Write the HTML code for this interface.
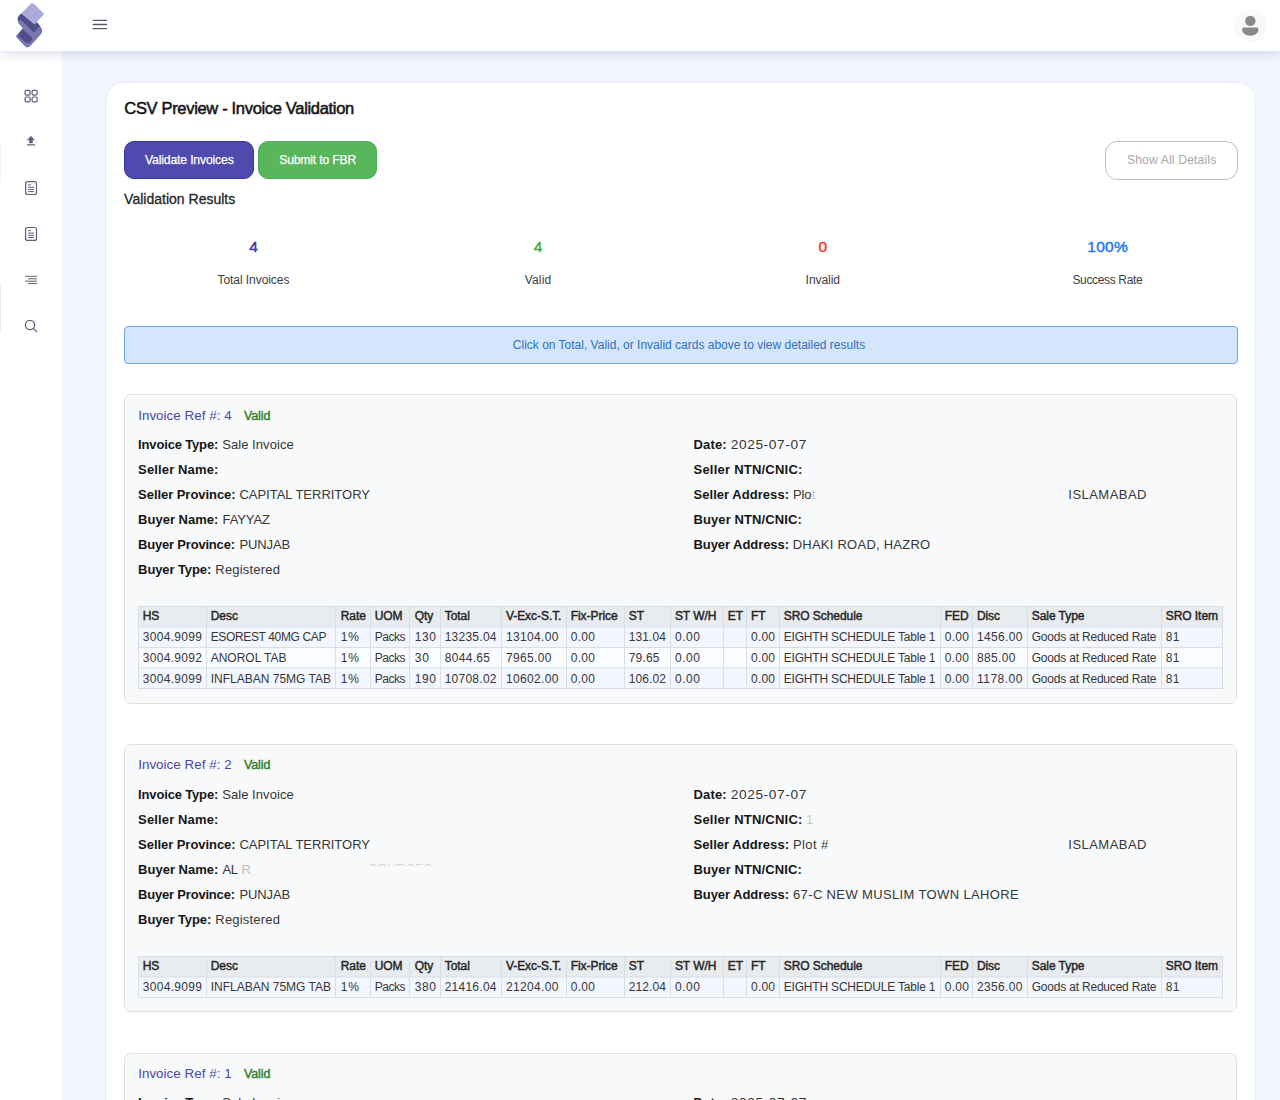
<!DOCTYPE html>
<html><head><meta charset="utf-8">
<style>
*{box-sizing:border-box;margin:0;padding:0}
html,body{width:1280px;height:1100px;overflow:hidden}
body{background:#f3f6fe;font-family:"Liberation Sans",sans-serif;color:#333;position:relative}
.abs{position:absolute}
#hdr{left:0;top:0;width:1280px;height:51px;background:#fff;box-shadow:0 2px 12px rgba(90,95,150,.24);z-index:5}
#side{left:0;top:51px;width:62px;height:1049px;background:#fff;z-index:2}
#card{left:107px;top:83px;width:1147px;height:1100px;background:#fff;border-radius:16px;box-shadow:0 0 4px rgba(120,130,180,.10)}
.t{position:absolute;white-space:nowrap;line-height:1}
.btn{position:absolute;top:141px;height:38px;border-radius:10px;color:#fff;font-size:13px;text-align:center;line-height:38px}
.inv{position:absolute;left:123.6px;width:1113.8px;background:#f8f9fa;border:1px solid #dde1e5;border-radius:7px}
</style></head><body>
<div class="abs" id="card"></div>
<div class="btn" style="left:124px;width:130px;background:#4e4aae;border:1px solid #3a33a3"></div>
<div class="btn" style="left:258.4px;width:118.5px;background:#58b65b;border:1px solid #47ae4b"></div>
<div class="abs" style="left:1105px;top:140.5px;width:133px;height:39px;border:1px solid #bdbdbd;border-radius:12px;background:#fff"></div>
<div class="abs" style="left:123.7px;top:326px;width:1114px;height:38px;border:1px solid #67a8f3;border-radius:4px;background:#d3e6fd"></div>
<!--MAIN-->
<div class="inv" style="top:394.4px;height:309.30000000000007px"></div>
<div class="inv" style="top:744.3px;height:267.70000000000005px"></div>
<div class="inv" style="top:1052.8px;height:147.20000000000005px"></div>
<svg class="abs" style="left:0;top:0" width="1280" height="1100" viewBox="0 0 1280 1100" shape-rendering="auto"><rect x="138" y="606.5" width="1085" height="20.5" fill="#e9ecef"/><rect x="138" y="627.0" width="1085" height="20.5" fill="#f3f6fe"/><rect x="138" y="647.5" width="1085" height="20.5" fill="#fbfcff"/><rect x="138" y="668.0" width="1085" height="20.5" fill="#f3f6fe"/><path d="M138,606.5H1223M138,627.0H1223M138,647.5H1223M138,668.0H1223M138,688.5H1223M138.5,606.0V689.0M206.5,606.0V689.0M335.5,606.0V689.0M370.5,606.0V689.0M409.5,606.0V689.0M440.5,606.0V689.0M501.5,606.0V689.0M566.5,606.0V689.0M624.5,606.0V689.0M670.5,606.0V689.0M723.5,606.0V689.0M746.5,606.0V689.0M779.5,606.0V689.0M940.5,606.0V689.0M972.5,606.0V689.0M1027.5,606.0V689.0M1161.5,606.0V689.0M1222.5,606.0V689.0" stroke="#d9dde4" stroke-width="1" fill="none"/></svg>
<svg class="abs" style="left:0;top:0" width="1280" height="1100" viewBox="0 0 1280 1100" shape-rendering="auto"><rect x="138" y="956.5" width="1085" height="20.5" fill="#e9ecef"/><rect x="138" y="977.0" width="1085" height="20.5" fill="#f3f6fe"/><path d="M138,956.5H1223M138,977.0H1223M138,997.5H1223M138.5,956.0V998.0M206.5,956.0V998.0M335.5,956.0V998.0M370.5,956.0V998.0M409.5,956.0V998.0M440.5,956.0V998.0M501.5,956.0V998.0M566.5,956.0V998.0M624.5,956.0V998.0M670.5,956.0V998.0M723.5,956.0V998.0M746.5,956.0V998.0M779.5,956.0V998.0M940.5,956.0V998.0M972.5,956.0V998.0M1027.5,956.0V998.0M1161.5,956.0V998.0M1222.5,956.0V998.0" stroke="#d9dde4" stroke-width="1" fill="none"/></svg>
<div class="t" style="left:124.30px;top:100px;font-size:16.5px;color:#161616;letter-spacing:-0.325px;-webkit-text-stroke:0.55px #161616">CSV Preview - Invoice Validation</div>
<div class="t" style="left:145.00px;top:154px;font-size:12.2px;color:#fff;letter-spacing:-0.155px;-webkit-text-stroke:0.25px #fff">Validate Invoices</div>
<div class="t" style="left:279.25px;top:154px;font-size:12.2px;color:#fff;letter-spacing:-0.188px;-webkit-text-stroke:0.25px #fff">Submit to FBR</div>
<div class="t" style="left:124.10px;top:192px;font-size:14px;color:#262626;letter-spacing:0.007px;-webkit-text-stroke:0.3px #262626">Validation Results</div>
<div class="t" style="left:1126.90px;top:154px;font-size:12.2px;color:#a9a9a9;letter-spacing:0.131px">Show All Details</div>
<div class="t" style="left:249.19px;top:239px;font-size:15.5px;color:#3a36a3;letter-spacing:0.300px;-webkit-text-stroke:0.45px #3a36a3">4</div>
<div class="t" style="left:533.79px;top:239px;font-size:15.5px;color:#44aa44;letter-spacing:0.300px;-webkit-text-stroke:0.45px #44aa44">4</div>
<div class="t" style="left:818.49px;top:239px;font-size:15.5px;color:#f23b30;letter-spacing:0.300px;-webkit-text-stroke:0.45px #f23b30">0</div>
<div class="t" style="left:1087.22px;top:239px;font-size:15.5px;color:#1c79fb;letter-spacing:0.300px;-webkit-text-stroke:0.45px #1c79fb">100%</div>
<div class="t" style="left:217.50px;top:274px;font-size:12px;color:#3d3d3d;letter-spacing:-0.062px">Total Invoices</div>
<div class="t" style="left:524.70px;top:274px;font-size:12px;color:#3d3d3d;letter-spacing:0.188px">Valid</div>
<div class="t" style="left:805.60px;top:274px;font-size:12px;color:#3d3d3d;letter-spacing:-0.048px">Invalid</div>
<div class="t" style="left:1072.40px;top:274px;font-size:12px;color:#3d3d3d;letter-spacing:-0.341px">Success Rate</div>
<div class="t" style="left:512.80px;top:339px;font-size:12px;color:#3370b8">Click on Total, Valid, or Invalid cards above to view detailed results</div>
<div class="t" style="left:138.20px;top:409px;font-size:13.4px;color:#4a47a6;letter-spacing:0.024px">Invoice Ref #: 4</div>
<div class="t" style="left:243.90px;top:410px;font-size:12.5px;color:#2c7d2c;letter-spacing:-0.094px;-webkit-text-stroke:0.4px #2c7d2c">Valid</div>
<div class="t" style="left:138.10px;top:438px;font-size:13px;color:#161616;font-weight:bold;letter-spacing:-0.160px">Invoice Type:</div>
<div class="t" style="left:222.20px;top:438px;font-size:13px;color:#363636;letter-spacing:0.061px">Sale Invoice</div>
<div class="t" style="left:138.10px;top:463px;font-size:13px;color:#161616;font-weight:bold;letter-spacing:0.139px">Seller Name:</div>
<div class="t" style="left:138.10px;top:488px;font-size:13px;color:#161616;font-weight:bold;letter-spacing:-0.052px">Seller Province:</div>
<div class="t" style="left:239.40px;top:488px;font-size:13px;color:#363636;letter-spacing:-0.010px">CAPITAL TERRITORY</div>
<div class="t" style="left:138.10px;top:513px;font-size:13px;color:#161616;font-weight:bold;letter-spacing:0.010px">Buyer Name:</div>
<div class="t" style="left:222.50px;top:513px;font-size:13px;color:#363636;letter-spacing:-0.084px">FAYYAZ</div>
<div class="t" style="left:138.10px;top:538px;font-size:13px;color:#161616;font-weight:bold;letter-spacing:-0.200px">Buyer Province:</div>
<div class="t" style="left:239.40px;top:538px;font-size:13px;color:#363636;letter-spacing:-0.079px">PUNJAB</div>
<div class="t" style="left:138.10px;top:563px;font-size:13px;color:#161616;font-weight:bold;letter-spacing:-0.102px">Buyer Type:</div>
<div class="t" style="left:215.30px;top:563px;font-size:13px;color:#363636;letter-spacing:0.203px">Registered</div>
<div class="t" style="left:693.50px;top:438px;font-size:13px;color:#161616;font-weight:bold;letter-spacing:0.146px">Date:</div>
<div class="t" style="left:730.70px;top:438px;font-size:13.7px;color:#363636;letter-spacing:0.620px">2025-07-07</div>
<div class="t" style="left:693.50px;top:463px;font-size:13px;color:#161616;font-weight:bold;letter-spacing:0.229px">Seller NTN/CNIC:</div>
<div class="t" style="left:693.50px;top:488px;font-size:13px;color:#161616;font-weight:bold;letter-spacing:0.042px">Seller Address:</div>
<div class="t" style="left:793.00px;top:488px;font-size:13px;color:#363636;letter-spacing:-0.148px">Plo</div>
<div class="t" style="left:1068.30px;top:488px;font-size:13px;color:#363636;letter-spacing:0.472px">ISLAMABAD</div>
<div class="t" style="left:693.50px;top:513px;font-size:13px;color:#161616;font-weight:bold;letter-spacing:0.100px">Buyer NTN/CNIC:</div>
<div class="t" style="left:693.50px;top:538px;font-size:13px;color:#161616;font-weight:bold;letter-spacing:-0.064px">Buyer Address:</div>
<div class="t" style="left:792.70px;top:538px;font-size:13px;color:#363636;letter-spacing:0.242px">DHAKI ROAD, HAZRO</div>
<div class="t" style="left:142.70px;top:610px;font-size:12px;color:#262626;letter-spacing:-0.050px;-webkit-text-stroke:0.45px #262626">HS</div>
<div class="t" style="left:210.70px;top:610px;font-size:12px;color:#262626;letter-spacing:-0.050px;-webkit-text-stroke:0.45px #262626">Desc</div>
<div class="t" style="left:340.70px;top:610px;font-size:12px;color:#262626;letter-spacing:-0.050px;-webkit-text-stroke:0.45px #262626">Rate</div>
<div class="t" style="left:374.70px;top:610px;font-size:12px;color:#262626;letter-spacing:-0.050px;-webkit-text-stroke:0.45px #262626">UOM</div>
<div class="t" style="left:414.70px;top:610px;font-size:12px;color:#262626;letter-spacing:-0.050px;-webkit-text-stroke:0.45px #262626">Qty</div>
<div class="t" style="left:444.70px;top:610px;font-size:12px;color:#262626;letter-spacing:-0.050px;-webkit-text-stroke:0.45px #262626">Total</div>
<div class="t" style="left:505.90px;top:610px;font-size:12px;color:#262626;letter-spacing:-0.050px;-webkit-text-stroke:0.45px #262626">V-Exc-S.T.</div>
<div class="t" style="left:570.70px;top:610px;font-size:12px;color:#262626;letter-spacing:-0.050px;-webkit-text-stroke:0.45px #262626">Fix-Price</div>
<div class="t" style="left:628.70px;top:610px;font-size:12px;color:#262626;letter-spacing:-0.050px;-webkit-text-stroke:0.45px #262626">ST</div>
<div class="t" style="left:674.90px;top:610px;font-size:12px;color:#262626;letter-spacing:-0.050px;-webkit-text-stroke:0.45px #262626">ST W/H</div>
<div class="t" style="left:727.70px;top:610px;font-size:12px;color:#262626;letter-spacing:-0.050px;-webkit-text-stroke:0.45px #262626">ET</div>
<div class="t" style="left:751.10px;top:610px;font-size:12px;color:#262626;letter-spacing:-0.050px;-webkit-text-stroke:0.45px #262626">FT</div>
<div class="t" style="left:783.70px;top:610px;font-size:12px;color:#262626;letter-spacing:-0.050px;-webkit-text-stroke:0.45px #262626">SRO Schedule</div>
<div class="t" style="left:944.70px;top:610px;font-size:12px;color:#262626;letter-spacing:-0.050px;-webkit-text-stroke:0.45px #262626">FED</div>
<div class="t" style="left:976.90px;top:610px;font-size:12px;color:#262626;letter-spacing:-0.050px;-webkit-text-stroke:0.45px #262626">Disc</div>
<div class="t" style="left:1031.70px;top:610px;font-size:12px;color:#262626;letter-spacing:-0.050px;-webkit-text-stroke:0.45px #262626">Sale Type</div>
<div class="t" style="left:1165.70px;top:610px;font-size:12px;color:#262626;letter-spacing:-0.050px;-webkit-text-stroke:0.45px #262626">SRO Item</div>
<div class="t" style="left:142.70px;top:631px;font-size:12px;color:#363636;letter-spacing:0.321px">3004.9099</div>
<div class="t" style="left:210.70px;top:631px;font-size:12px;color:#363636;letter-spacing:-0.357px">ESOREST 40MG CAP</div>
<div class="t" style="left:340.70px;top:631px;font-size:12px;color:#363636;letter-spacing:0.956px">1%</div>
<div class="t" style="left:374.70px;top:631px;font-size:12px;color:#363636;letter-spacing:-0.472px">Packs</div>
<div class="t" style="left:414.70px;top:631px;font-size:12px;color:#363636;letter-spacing:0.634px">130</div>
<div class="t" style="left:444.70px;top:631px;font-size:12px;color:#363636;letter-spacing:0.248px">13235.04</div>
<div class="t" style="left:505.90px;top:631px;font-size:12px;color:#363636;letter-spacing:0.363px">13104.00</div>
<div class="t" style="left:570.70px;top:631px;font-size:12px;color:#363636;letter-spacing:0.314px">0.00</div>
<div class="t" style="left:628.70px;top:631px;font-size:12px;color:#363636;letter-spacing:0.119px">131.04</div>
<div class="t" style="left:674.90px;top:631px;font-size:12px;color:#363636;letter-spacing:0.580px">0.00</div>
<div class="t" style="left:751.10px;top:631px;font-size:12px;color:#363636;letter-spacing:0.180px">0.00</div>
<div class="t" style="left:783.70px;top:631px;font-size:12px;color:#363636;letter-spacing:-0.184px">EIGHTH SCHEDULE Table 1</div>
<div class="t" style="left:944.70px;top:631px;font-size:12px;color:#363636;letter-spacing:0.314px">0.00</div>
<div class="t" style="left:976.90px;top:631px;font-size:12px;color:#363636;letter-spacing:0.368px">1456.00</div>
<div class="t" style="left:1031.70px;top:631px;font-size:12px;color:#363636;letter-spacing:-0.198px">Goods at Reduced Rate</div>
<div class="t" style="left:1165.70px;top:631px;font-size:12px;color:#363636;letter-spacing:0.441px">81</div>
<div class="t" style="left:142.70px;top:652px;font-size:12px;color:#363636;letter-spacing:0.321px">3004.9092</div>
<div class="t" style="left:210.70px;top:652px;font-size:12px;color:#363636">ANOROL TAB</div>
<div class="t" style="left:340.70px;top:652px;font-size:12px;color:#363636;letter-spacing:0.956px">1%</div>
<div class="t" style="left:374.70px;top:652px;font-size:12px;color:#363636;letter-spacing:-0.472px">Packs</div>
<div class="t" style="left:414.70px;top:652px;font-size:12px;color:#363636;letter-spacing:0.941px">30</div>
<div class="t" style="left:444.70px;top:652px;font-size:12px;color:#363636;letter-spacing:0.318px">8044.65</div>
<div class="t" style="left:505.90px;top:652px;font-size:12px;color:#363636;letter-spacing:0.368px">7965.00</div>
<div class="t" style="left:570.70px;top:652px;font-size:12px;color:#363636;letter-spacing:0.314px">0.00</div>
<div class="t" style="left:628.70px;top:652px;font-size:12px;color:#363636;letter-spacing:0.192px">79.65</div>
<div class="t" style="left:674.90px;top:652px;font-size:12px;color:#363636;letter-spacing:0.580px">0.00</div>
<div class="t" style="left:751.10px;top:652px;font-size:12px;color:#363636;letter-spacing:0.180px">0.00</div>
<div class="t" style="left:783.70px;top:652px;font-size:12px;color:#363636;letter-spacing:-0.184px">EIGHTH SCHEDULE Table 1</div>
<div class="t" style="left:944.70px;top:652px;font-size:12px;color:#363636;letter-spacing:0.314px">0.00</div>
<div class="t" style="left:976.90px;top:652px;font-size:12px;color:#363636;letter-spacing:0.379px">885.00</div>
<div class="t" style="left:1031.70px;top:652px;font-size:12px;color:#363636;letter-spacing:-0.198px">Goods at Reduced Rate</div>
<div class="t" style="left:1165.70px;top:652px;font-size:12px;color:#363636;letter-spacing:0.441px">81</div>
<div class="t" style="left:142.70px;top:673px;font-size:12px;color:#363636;letter-spacing:0.321px">3004.9099</div>
<div class="t" style="left:210.70px;top:673px;font-size:12px;color:#363636">INFLABAN 75MG TAB</div>
<div class="t" style="left:340.70px;top:673px;font-size:12px;color:#363636;letter-spacing:0.956px">1%</div>
<div class="t" style="left:374.70px;top:673px;font-size:12px;color:#363636;letter-spacing:-0.472px">Packs</div>
<div class="t" style="left:414.70px;top:673px;font-size:12px;color:#363636;letter-spacing:0.634px">190</div>
<div class="t" style="left:444.70px;top:673px;font-size:12px;color:#363636;letter-spacing:0.248px">10708.02</div>
<div class="t" style="left:505.90px;top:673px;font-size:12px;color:#363636;letter-spacing:0.363px">10602.00</div>
<div class="t" style="left:570.70px;top:673px;font-size:12px;color:#363636;letter-spacing:0.314px">0.00</div>
<div class="t" style="left:628.70px;top:673px;font-size:12px;color:#363636;letter-spacing:0.119px">106.02</div>
<div class="t" style="left:674.90px;top:673px;font-size:12px;color:#363636;letter-spacing:0.580px">0.00</div>
<div class="t" style="left:751.10px;top:673px;font-size:12px;color:#363636;letter-spacing:0.180px">0.00</div>
<div class="t" style="left:783.70px;top:673px;font-size:12px;color:#363636;letter-spacing:-0.184px">EIGHTH SCHEDULE Table 1</div>
<div class="t" style="left:944.70px;top:673px;font-size:12px;color:#363636;letter-spacing:0.314px">0.00</div>
<div class="t" style="left:976.90px;top:673px;font-size:12px;color:#363636;letter-spacing:0.517px">1178.00</div>
<div class="t" style="left:1031.70px;top:673px;font-size:12px;color:#363636;letter-spacing:-0.198px">Goods at Reduced Rate</div>
<div class="t" style="left:1165.70px;top:673px;font-size:12px;color:#363636;letter-spacing:0.441px">81</div>
<div class="t" style="left:138.20px;top:758px;font-size:13.4px;color:#4a47a6;letter-spacing:0.024px">Invoice Ref #: 2</div>
<div class="t" style="left:243.90px;top:759px;font-size:12.5px;color:#2c7d2c;letter-spacing:-0.094px;-webkit-text-stroke:0.4px #2c7d2c">Valid</div>
<div class="t" style="left:138.10px;top:788px;font-size:13px;color:#161616;font-weight:bold;letter-spacing:-0.160px">Invoice Type:</div>
<div class="t" style="left:222.20px;top:788px;font-size:13px;color:#363636;letter-spacing:0.061px">Sale Invoice</div>
<div class="t" style="left:138.10px;top:813px;font-size:13px;color:#161616;font-weight:bold;letter-spacing:0.139px">Seller Name:</div>
<div class="t" style="left:138.10px;top:838px;font-size:13px;color:#161616;font-weight:bold;letter-spacing:-0.052px">Seller Province:</div>
<div class="t" style="left:239.40px;top:838px;font-size:13px;color:#363636;letter-spacing:-0.010px">CAPITAL TERRITORY</div>
<div class="t" style="left:138.10px;top:863px;font-size:13px;color:#161616;font-weight:bold;letter-spacing:0.010px">Buyer Name:</div>
<div class="t" style="left:222.50px;top:863px;font-size:13px;color:#363636;letter-spacing:-0.406px">AL</div>
<div class="t" style="left:138.10px;top:888px;font-size:13px;color:#161616;font-weight:bold;letter-spacing:-0.200px">Buyer Province:</div>
<div class="t" style="left:239.40px;top:888px;font-size:13px;color:#363636;letter-spacing:-0.079px">PUNJAB</div>
<div class="t" style="left:138.10px;top:913px;font-size:13px;color:#161616;font-weight:bold;letter-spacing:-0.102px">Buyer Type:</div>
<div class="t" style="left:215.30px;top:913px;font-size:13px;color:#363636;letter-spacing:0.203px">Registered</div>
<div class="t" style="left:693.50px;top:788px;font-size:13px;color:#161616;font-weight:bold;letter-spacing:0.146px">Date:</div>
<div class="t" style="left:730.70px;top:788px;font-size:13.7px;color:#363636;letter-spacing:0.620px">2025-07-07</div>
<div class="t" style="left:693.50px;top:813px;font-size:13px;color:#161616;font-weight:bold;letter-spacing:0.229px">Seller NTN/CNIC:</div>
<div class="t" style="left:693.50px;top:838px;font-size:13px;color:#161616;font-weight:bold;letter-spacing:0.042px">Seller Address:</div>
<div class="t" style="left:793.00px;top:838px;font-size:13px;color:#363636;letter-spacing:0.390px">Plot #</div>
<div class="t" style="left:1068.30px;top:838px;font-size:13px;color:#363636;letter-spacing:0.472px">ISLAMABAD</div>
<div class="t" style="left:693.50px;top:863px;font-size:13px;color:#161616;font-weight:bold;letter-spacing:0.100px">Buyer NTN/CNIC:</div>
<div class="t" style="left:693.50px;top:888px;font-size:13px;color:#161616;font-weight:bold;letter-spacing:-0.064px">Buyer Address:</div>
<div class="t" style="left:793.00px;top:888px;font-size:13px;color:#363636;letter-spacing:0.365px">67-C NEW MUSLIM TOWN LAHORE</div>
<div class="t" style="left:142.70px;top:960px;font-size:12px;color:#262626;letter-spacing:-0.050px;-webkit-text-stroke:0.45px #262626">HS</div>
<div class="t" style="left:210.70px;top:960px;font-size:12px;color:#262626;letter-spacing:-0.050px;-webkit-text-stroke:0.45px #262626">Desc</div>
<div class="t" style="left:340.70px;top:960px;font-size:12px;color:#262626;letter-spacing:-0.050px;-webkit-text-stroke:0.45px #262626">Rate</div>
<div class="t" style="left:374.70px;top:960px;font-size:12px;color:#262626;letter-spacing:-0.050px;-webkit-text-stroke:0.45px #262626">UOM</div>
<div class="t" style="left:414.70px;top:960px;font-size:12px;color:#262626;letter-spacing:-0.050px;-webkit-text-stroke:0.45px #262626">Qty</div>
<div class="t" style="left:444.70px;top:960px;font-size:12px;color:#262626;letter-spacing:-0.050px;-webkit-text-stroke:0.45px #262626">Total</div>
<div class="t" style="left:505.90px;top:960px;font-size:12px;color:#262626;letter-spacing:-0.050px;-webkit-text-stroke:0.45px #262626">V-Exc-S.T.</div>
<div class="t" style="left:570.70px;top:960px;font-size:12px;color:#262626;letter-spacing:-0.050px;-webkit-text-stroke:0.45px #262626">Fix-Price</div>
<div class="t" style="left:628.70px;top:960px;font-size:12px;color:#262626;letter-spacing:-0.050px;-webkit-text-stroke:0.45px #262626">ST</div>
<div class="t" style="left:674.90px;top:960px;font-size:12px;color:#262626;letter-spacing:-0.050px;-webkit-text-stroke:0.45px #262626">ST W/H</div>
<div class="t" style="left:727.70px;top:960px;font-size:12px;color:#262626;letter-spacing:-0.050px;-webkit-text-stroke:0.45px #262626">ET</div>
<div class="t" style="left:751.10px;top:960px;font-size:12px;color:#262626;letter-spacing:-0.050px;-webkit-text-stroke:0.45px #262626">FT</div>
<div class="t" style="left:783.70px;top:960px;font-size:12px;color:#262626;letter-spacing:-0.050px;-webkit-text-stroke:0.45px #262626">SRO Schedule</div>
<div class="t" style="left:944.70px;top:960px;font-size:12px;color:#262626;letter-spacing:-0.050px;-webkit-text-stroke:0.45px #262626">FED</div>
<div class="t" style="left:976.90px;top:960px;font-size:12px;color:#262626;letter-spacing:-0.050px;-webkit-text-stroke:0.45px #262626">Disc</div>
<div class="t" style="left:1031.70px;top:960px;font-size:12px;color:#262626;letter-spacing:-0.050px;-webkit-text-stroke:0.45px #262626">Sale Type</div>
<div class="t" style="left:1165.70px;top:960px;font-size:12px;color:#262626;letter-spacing:-0.050px;-webkit-text-stroke:0.45px #262626">SRO Item</div>
<div class="t" style="left:142.70px;top:981px;font-size:12px;color:#363636;letter-spacing:0.321px">3004.9099</div>
<div class="t" style="left:210.70px;top:981px;font-size:12px;color:#363636">INFLABAN 75MG TAB</div>
<div class="t" style="left:340.70px;top:981px;font-size:12px;color:#363636;letter-spacing:0.956px">1%</div>
<div class="t" style="left:374.70px;top:981px;font-size:12px;color:#363636;letter-spacing:-0.472px">Packs</div>
<div class="t" style="left:414.70px;top:981px;font-size:12px;color:#363636;letter-spacing:0.634px">380</div>
<div class="t" style="left:444.70px;top:981px;font-size:12px;color:#363636;letter-spacing:0.248px">21416.04</div>
<div class="t" style="left:505.90px;top:981px;font-size:12px;color:#363636;letter-spacing:0.363px">21204.00</div>
<div class="t" style="left:570.70px;top:981px;font-size:12px;color:#363636;letter-spacing:0.314px">0.00</div>
<div class="t" style="left:628.70px;top:981px;font-size:12px;color:#363636;letter-spacing:0.119px">212.04</div>
<div class="t" style="left:674.90px;top:981px;font-size:12px;color:#363636;letter-spacing:0.580px">0.00</div>
<div class="t" style="left:751.10px;top:981px;font-size:12px;color:#363636;letter-spacing:0.180px">0.00</div>
<div class="t" style="left:783.70px;top:981px;font-size:12px;color:#363636;letter-spacing:-0.184px">EIGHTH SCHEDULE Table 1</div>
<div class="t" style="left:944.70px;top:981px;font-size:12px;color:#363636;letter-spacing:0.314px">0.00</div>
<div class="t" style="left:976.90px;top:981px;font-size:12px;color:#363636;letter-spacing:0.368px">2356.00</div>
<div class="t" style="left:1031.70px;top:981px;font-size:12px;color:#363636;letter-spacing:-0.198px">Goods at Reduced Rate</div>
<div class="t" style="left:1165.70px;top:981px;font-size:12px;color:#363636;letter-spacing:0.441px">81</div>
<div class="t" style="left:138.20px;top:1067px;font-size:13.4px;color:#4a47a6;letter-spacing:0.024px">Invoice Ref #: 1</div>
<div class="t" style="left:243.90px;top:1068px;font-size:12.5px;color:#2c7d2c;letter-spacing:-0.094px;-webkit-text-stroke:0.4px #2c7d2c">Valid</div>
<div class="t" style="left:138.10px;top:1096px;font-size:13px;color:#161616;font-weight:bold;letter-spacing:-0.160px">Invoice Type:</div>
<div class="t" style="left:222.20px;top:1096px;font-size:13px;color:#363636;letter-spacing:0.061px">Sale Invoice</div>
<div class="t" style="left:693.50px;top:1096px;font-size:13px;color:#161616;font-weight:bold;letter-spacing:0.146px">Date:</div>
<div class="t" style="left:730.70px;top:1096px;font-size:13.7px;color:#363636;letter-spacing:0.620px">2025-07-07</div>
<div class="t" style="left:811.70px;top:488px;font-size:13px;color:#c9c9c9">t</div>
<div class="t" style="left:241.50px;top:863px;font-size:13px;color:#bfbfbf">R</div>
<div class="t" style="left:806.00px;top:813px;font-size:13px;color:#c6c6c6">1</div>
<!--/MAIN-->
<div class="abs" style="left:368.5px;top:864px;width:62px;height:2.4px;overflow:hidden"><div class="t" style="left:0;top:-2px;font-size:13px;color:#d4d4d6;letter-spacing:-.1px">SOURCES</div></div>
<div class="abs" id="side">
<div class="abs" style="left:0;top:93px;width:1px;height:36px;background:#f3f3f8"></div><div class="abs" style="left:0;top:233px;width:1px;height:48px;background:#eeedf9"></div>
<svg class="abs" style="left:0;top:0" width="62" height="320" viewBox="0 51 62 320" fill="none" stroke="#5b617a" stroke-width="1.2" stroke-linecap="round" stroke-linejoin="round">
<rect x="25.1" y="90.3" width="5" height="4.8" rx="1.3"/><rect x="32.1" y="90.3" width="5" height="4.8" rx="1.3"/>
<rect x="25.1" y="97" width="5" height="4.8" rx="1.3"/><rect x="32.1" y="97" width="5" height="4.8" rx="1.3"/>
<path d="M31,136.2 L34.4,139.9 H32.5 V143 H29.5 V139.9 H27.6 Z" fill="#5b617a" stroke-width=".5"/>
<path d="M27.5,144.9 H34.5" stroke-width="1.2"/>
<rect x="25.6" y="181.6" width="10.9" height="12.9" rx="2"/>
<path d="M28.5,184.8H30.6M28.5,187.2H33.6M28.5,189.4H33.6M28.5,191.6H33.6" stroke-width="1"/>
<rect x="25.6" y="227.5" width="10.9" height="12.9" rx="2"/>
<path d="M28.5,230.7H30.6M28.5,233.1H33.6M28.5,235.3H33.6M28.5,237.5H33.6" stroke-width="1"/>
<path d="M25.6,276.3H36.6M28.4,278.8H36.6M25.6,281.2H36.6M28.4,283.6H36.6" stroke-width="1"/>
<circle cx="30" cy="325" r="4.6" stroke-width="1.3"/><path d="M33.4,328.4 L36.6,331.6" stroke-width="1.3"/>
</svg>
</div>
<div class="abs" id="hdr">
<svg class="abs" style="left:0;top:0" width="130" height="51" viewBox="0 0 130 51">
<path d="M21.8,13.5 C19,14.6 17.3,16.8 17.5,19.6 C17.6,21.8 18.8,23.9 20.2,25.5 L22.8,28.1 L15.7,36.4 L23.7,44.9 C25,46.5 26.2,47.3 27.4,47.3 C28.7,47.3 29.8,46.5 30.8,45.4 L40.7,34.5 C41.8,33.2 42.3,31.8 42.2,30.3 C42.1,29 41.6,27.9 40.7,27 L37,22.2 L34.6,24.3 Z" fill="#7976b2"/>
<path d="M21.6,13.7 L34.6,24.3 L37,22.2 L39.9,26.2 L33.6,32.6 L23.7,22.4 C22.6,21.2 21.4,20.3 20.2,20.1 C19.4,20 18.9,20.1 18.3,20.3 C17.6,18.3 18.6,15.3 21.6,13.7 Z" fill="#504d8b"/>
<path d="M22.8,28.9 L17.8,35.2 L25.1,42.3 C26.3,43.4 27.8,43.6 29.2,43 C30.6,42.3 31.6,41.2 32,39.3 C32.2,38.1 31.7,37.2 30.8,36.4 Z" fill="#504d8b"/>
<path d="M30.2,4.3 C31.3,3 32.9,2.7 34.1,3.9 L44.1,13.9 L34.6,24.4 L21.3,13.4 Z" fill="#aba8da"/>
<g stroke="#555b72" stroke-width="1.3" stroke-linecap="round"><path d="M93.2,20.3H106.6M93.2,24.5H106.6M93.2,28.7H106.6"/></g>
</svg>
<div class="abs" style="left:1234px;top:9px;width:33px;height:33px;border-radius:50%;background:#f9f9f9"></div>
<svg class="abs" style="left:1234px;top:9px" width="33" height="33" viewBox="0 0 33 33">
<circle cx="16.3" cy="11.9" r="5.2" fill="#8a8a8a"/>
<path d="M8.1,20.3 C8.1,18.9 9,18.4 10,18.4 H22.6 C23.6,18.4 24.5,18.9 24.5,20.3 C24.5,24.2 20.8,26.7 16.3,26.7 C11.8,26.7 8.1,24.2 8.1,20.3 Z" fill="#8a8a8a"/>
</svg>
</div>
</body></html>
